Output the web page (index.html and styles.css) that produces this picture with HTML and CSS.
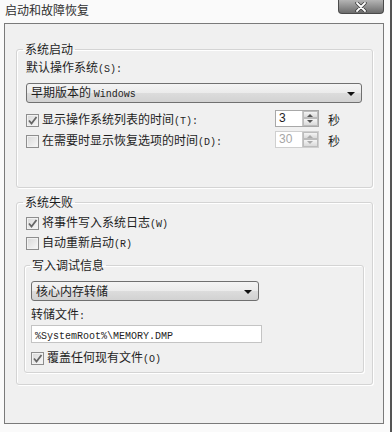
FILE: index.html
```html
<!DOCTYPE html>
<html lang="zh-CN">
<head>
    <meta charset="UTF-8">
    <title>启动和故障恢复</title>
    <link rel="stylesheet" href="styles.css">
</head>
<body>
    <div class="window">
        <!-- Title bar -->
        <div class="titlebar">
            <div class="title">启动和故障恢复</div>
            <div class="close">
                <svg width="14" height="10" viewBox="0 0 14 10">
                    <path d="M3 1 L11 9 M11 1 L3 9" stroke="#3a3a3a" stroke-width="3.4" stroke-linecap="round"/>
                    <path d="M3 1 L11 9 M11 1 L3 9" stroke="#ffffff" stroke-width="1.8" stroke-linecap="round"/>
                </svg>
            </div>
        </div>

        <!-- Dialog body -->
        <div class="panel">
            <fieldset class="group">
                <legend>系统启动</legend>
                <div class="label">默认操作系统<span class="en">(S):</span></div>
                <div class="select wide">
                    <span>早期版本的 <span class="en">Windows</span></span>
                    <span class="arrow"></span>
                </div>
                <div class="row spin-row">
                    <span class="cb checked"><svg width="11" height="11" viewBox="0 0 11 11"><path d="M2 5.5 L4.5 8.5 L9.5 2" fill="none" stroke="#666" stroke-width="1.8"/></svg></span>
                    <span class="text">显示操作系统列表的时间<span class="en">(T):</span></span>
                    <div class="spin">
                        <span class="value">3</span>
                        <span class="btns"><span class="up"></span><span class="down"></span></span>
                    </div>
                    <span class="unit">秒</span>
                </div>
                <div class="row spin-row">
                    <span class="cb"></span>
                    <span class="text">在需要时显示恢复选项的时间<span class="en">(D):</span></span>
                    <div class="spin disabled">
                        <span class="value">30</span>
                        <span class="btns"><span class="up"></span><span class="down"></span></span>
                    </div>
                    <span class="unit">秒</span>
                </div>
            </fieldset>

            <fieldset class="group second">
                <legend>系统失败</legend>
                <div class="row">
                    <span class="cb checked"><svg width="11" height="11" viewBox="0 0 11 11"><path d="M2 5.5 L4.5 8.5 L9.5 2" fill="none" stroke="#666" stroke-width="1.8"/></svg></span>
                    <span class="text">将事件写入系统日志<span class="en">(W)</span></span>
                </div>
                <div class="row gap">
                    <span class="cb"></span>
                    <span class="text">自动重新启动<span class="en">(R)</span></span>
                </div>

                <fieldset class="group inner">
                    <legend>写入调试信息</legend>
                    <div class="select short">
                        <span>核心内存转储</span>
                        <span class="arrow"></span>
                    </div>
                    <div class="label file-label">转储文件<span class="en">:</span></div>
                    <div class="input"><span class="en">%SystemRoot%\MEMORY.DMP</span></div>
                    <div class="row overwrite">
                        <span class="cb checked"><svg width="11" height="11" viewBox="0 0 11 11"><path d="M2 5.5 L4.5 8.5 L9.5 2" fill="none" stroke="#666" stroke-width="1.8"/></svg></span>
                        <span class="text">覆盖任何现有文件<span class="en">(O)</span></span>
                    </div>
                </fieldset>
            </fieldset>
        </div>
    </div>
</body>
</html>
```

FILE: styles.css
```css
body, html {
    margin: 0;
    padding: 0;
    width: 392px;
    height: 432px;
    overflow: hidden;
    background-color: #fafafa;
    font-family: "Noto Sans CJK SC", sans-serif;
    font-size: 12px;
    color: #1e1e1e;
}

.window {
    height: 432px;
    border-right: 2px solid #555;
    box-sizing: border-box;
}

/* Title bar */
.titlebar {
    height: 23px;
    display: flex;
    justify-content: space-between;
    align-items: flex-start;
}

.title {
    padding: 2px 0 0 5px;
    line-height: 16px;
    color: #303030;
}

.close {
    width: 44px;
    height: 13px;
    margin-right: 6px;
    background: linear-gradient(#b4b4b4, #6c6c6c);
    border: 1px solid #4a4a4a;
    border-top: none;
    border-radius: 0 0 4px 4px;
    display: flex;
    justify-content: center;
    align-items: center;
}

/* Main panel */
.panel {
    margin-left: 4px;
    width: 378px;
    height: 399px;
    border: 1px solid #7a7a7a;
    background-color: #f0f0f0;
    padding: 18px 0 0 11px;
    box-sizing: border-box;
    width: 380px;
    height: 401px;
}

.group {
    margin: 0;
    width: 357px;
    box-sizing: border-box;
    border: 1px solid #d4d4d4;
    border-radius: 3px;
    box-shadow: inset 1px 1px 0 #fff, 1px 1px 0 #fff;
    padding: 3px 10px 39px 9px;
}

.group legend {
    margin-left: -3px;
    padding: 0 2px;
    line-height: 14px;
}

.group.second {
    margin-top: 7px;
    padding: 6px 10px 11px 9px;
}

.group.inner {
    width: auto;
    margin: 7px -2px 0 -2px;
    padding: 9px 10px 6px 6px;
}

.group.inner legend {
    margin-left: -1px;
}

.en {
    font-family: "Liberation Mono", monospace;
    font-size: 10px;
}

.label {
    line-height: 16px;
}

/* Drop downs */
.select {
    margin-top: 5px;
    height: 20px;
    box-sizing: border-box;
    border: 1px solid #707070;
    border-radius: 3px;
    background: linear-gradient(#f4f4f4 0%, #ebebeb 50%, #dcdcdc 51%, #d2d2d2 100%);
    display: flex;
    align-items: center;
    justify-content: space-between;
    padding: 0 6px 0 4px;
    line-height: 16px;
}

.select.wide {
    width: 336px;
}

.select.short {
    margin-top: 0;
    width: 228px;
}

.arrow {
    width: 0;
    height: 0;
    border-left: 4px solid transparent;
    border-right: 4px solid transparent;
    border-top: 4px solid #111;
    margin-top: 2px;
}

/* Check rows */
.row {
    display: flex;
    align-items: center;
    height: 16px;
}

.row.gap {
    margin-top: 4px;
}

.spin-row {
    height: 18px;
    margin-top: 3px;
    padding-right: 22px;
}

.spin-row:first-of-type,
.select + .spin-row {
    margin-top: 6px;
}

.spin-row .cb {
    margin-top: 5px;
}

.spin-row .text {
    flex: 1;
    margin-top: 5px;
}

.cb {
    width: 13px;
    height: 13px;
    box-sizing: border-box;
    border: 1px solid #8e8e8e;
    background: linear-gradient(135deg, #d8d8d8, #f8f8f8);
    box-shadow: inset 0 0 0 1px #f2f2f2;
    display: flex;
    align-items: center;
    justify-content: center;
    flex: none;
}

.text {
    margin-left: 3px;
    line-height: 16px;
}

/* Spinners */
.spin {
    width: 44px;
    height: 17px;
    box-sizing: border-box;
    border: 1px solid #a8a8a8;
    background-color: #fff;
    display: flex;
}

.spin .value {
    flex: 1;
    padding-left: 3px;
    line-height: 15px;
    font-family: "Liberation Sans", sans-serif;
}

.spin .btns {
    width: 15px;
    display: flex;
    flex-direction: column;
    border-left: 1px solid #c8c8c8;
}

.spin .up,
.spin .down {
    flex: 1;
    background: linear-gradient(#f4f4f4, #dadada);
    border: 1px solid #bcbcbc;
    position: relative;
}

.spin .up::after,
.spin .down::after {
    content: "";
    position: absolute;
    left: 3px;
    top: 2px;
    border-left: 3px solid transparent;
    border-right: 3px solid transparent;
}

.spin .up::after {
    border-bottom: 3px solid #555;
}

.spin .down::after {
    border-top: 3px solid #555;
    top: 1px;
}

.spin.disabled {
    border-color: #cfcfcf;
}

.spin.disabled .value {
    color: #a6a6a6;
}

.spin.disabled .up::after {
    border-bottom-color: #aaa;
}

.spin.disabled .down::after {
    border-top-color: #aaa;
}

.unit {
    margin-left: 9px;
    margin-top: 2px;
}

/* Dump file */
.file-label {
    margin-top: 6px;
    line-height: 14px;
}

.input {
    margin-top: 1px;
    width: 231px;
    height: 18px;
    box-sizing: border-box;
    border: 1px solid #c4c4c4;
    background-color: #fff;
    padding-left: 3px;
    line-height: 16px;
}

.row.overwrite {
    margin-top: 7px;
}
```
